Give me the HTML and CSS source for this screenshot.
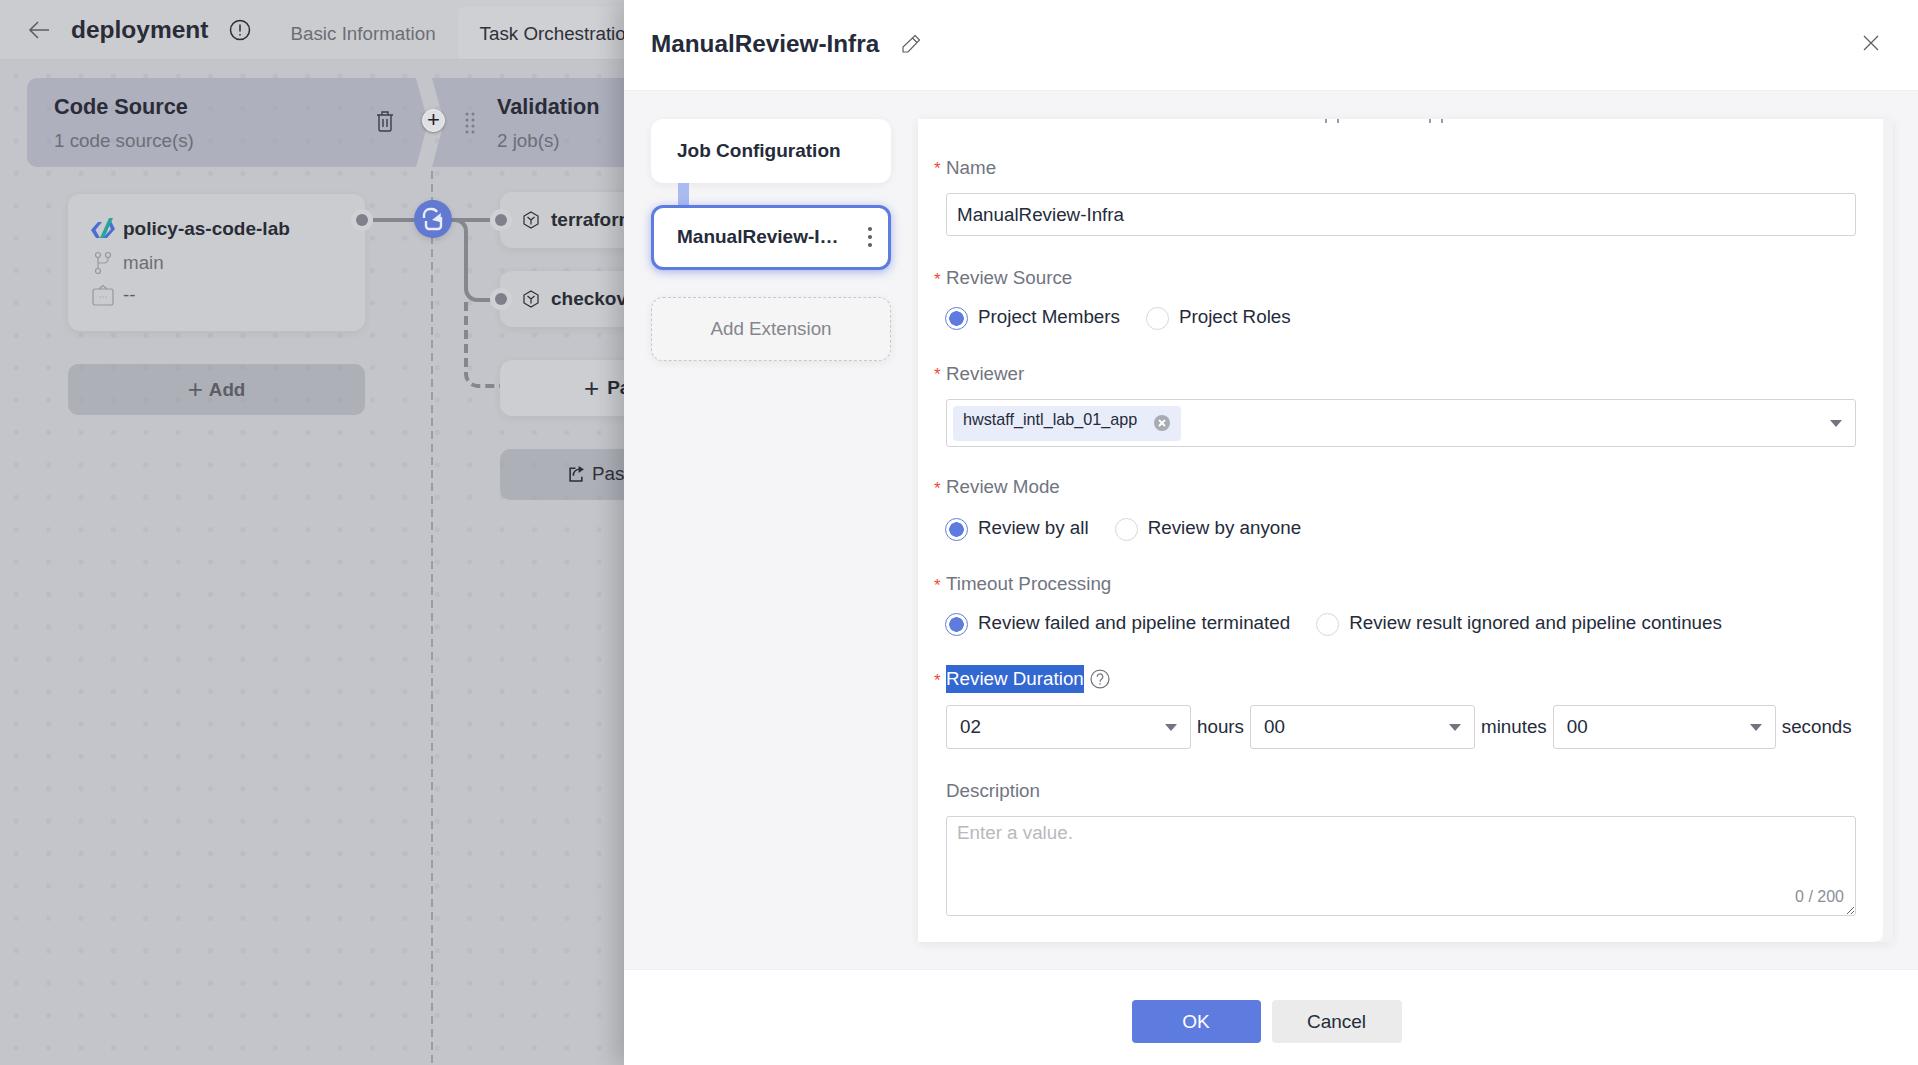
FILE: index.html
```html
<!DOCTYPE html>
<html lang="en">
<head>
  <meta charset="UTF-8">
  <title>deployment - Task Orchestration</title>
  <link rel="stylesheet" href="styles.css">
</head>
<body>

<div class="page">
  <div class="topbar">
    <svg class="back-icon" width="22" height="20" viewBox="0 0 22 20"><path d="M21 10H2M10 2l-8 8 8 8" fill="none" stroke="#5c5e66" stroke-width="1.6"/></svg>
    <span class="page-title">deployment</span>
    <svg class="info-icon" width="22" height="22" viewBox="0 0 22 22"><circle cx="11" cy="11" r="9.5" fill="none" stroke="#2b2d36" stroke-width="1.5"/><path d="M11 5.5v7M11 15v1.6" stroke="#2b2d36" stroke-width="1.5"/></svg>
    <div class="tab">Basic Information</div>
    <div class="tab active">Task Orchestration</div>
  </div>

  <div class="canvas">
    <svg class="links" width="624" height="1005" viewBox="0 60 624 1005">
      <path d="M432 171V1065" fill="none" stroke="#9a9ca2" stroke-width="2" stroke-dasharray="8 5"/>
      <path d="M373 220H500" fill="none" stroke="#85878f" stroke-width="4"/>
      <path d="M452 220h3a11 11 0 0 1 11 11v58a11 11 0 0 0 11 11h14" fill="none" stroke="#85878f" stroke-width="4"/>
      <path d="M466 302v72a12 12 0 0 0 12 12h22" fill="none" stroke="#85878f" stroke-width="4" stroke-dasharray="9 5"/>
    </svg>

    <div class="column first">
      <div class="stage stage-source">
        <div class="stage-text">
          <div class="stage-name">Code Source</div>
          <div class="stage-sub">1 code source(s)</div>
        </div>
        <svg class="trash" width="18" height="22" viewBox="0 0 18 22"><path d="M1 5h16M6 5V2h6v3M3 5v14.5a1.500 1.500 0 0 0 1.500 1.500h9a1.500 1.500 0 0 0 1.500-1.500V5M7 9v8M11 9v8" fill="none" stroke="#3c3e48" stroke-width="1.400"/></svg>
      </div>
      <div class="source-card">
        <div class="source-row title">
          <svg class="row-icon" width="26" height="26" viewBox="0 0 26 26"><path d="M8 6L1 14l5 8h4l-4.500-8L12 6z" fill="#4a6fd0"/><path d="M21 5l4 8-8 9h-4l8-9-2.500-5z" fill="#4a6fd0"/><path d="M19 2l-9 20h4l9-20z" fill="#27a59b"/></svg>
          <span>policy-as-code-lab</span>
        </div>
        <div class="source-row">
          <svg class="row-icon" width="18" height="24" viewBox="0 0 18 24"><g fill="none" stroke="#95979e" stroke-width="1.200"><circle cx="4" cy="4" r="2.500"/><circle cx="14" cy="4" r="2.500"/><circle cx="4" cy="20" r="2.500"/><path d="M4 6.500v11M14 6.500v1.500a4 4 0 0 1-4 4H4"/></g></svg>
          <span>main</span>
        </div>
        <div class="source-row">
          <svg class="row-icon" width="22" height="22" viewBox="0 0 22 22"><g fill="none" stroke="#95979e" stroke-width="1.200"><rect x="1" y="5" width="20" height="16" rx="2"/><path d="M7 5l4-3.500L15 5"/><path d="M7.500 13h1M10.500 13h1M13.500 13h1"/></g></svg>
          <span class="dash">--</span>
        </div>
      </div>
      <div class="ghost-btn add-source"><span class="plus">+</span> Add</div>
    </div>

    <div class="column second">
      <div class="stage stage-next">
        <svg class="grip" width="10" height="24" viewBox="0 0 10 24"><g fill="#7c7e87"><circle cx="2" cy="3" r="1.500"/><circle cx="8" cy="3" r="1.500"/><circle cx="2" cy="9" r="1.500"/><circle cx="8" cy="9" r="1.500"/><circle cx="2" cy="15" r="1.500"/><circle cx="8" cy="15" r="1.500"/><circle cx="2" cy="21" r="1.500"/><circle cx="8" cy="21" r="1.500"/></g></svg>
        <div class="stage-text">
          <div class="stage-name">Validation</div>
          <div class="stage-sub">2 job(s)</div>
        </div>
      </div>
      <div class="job-card">
        <svg class="cube" width="16" height="18" viewBox="0 0 16 18"><path d="M8 1l7 4v8l-7 4-7-4V5z" fill="none" stroke="#2b2d36" stroke-width="1.200"/><path d="M4.500 6L8 9l3.500-3M8 9v4.500" fill="none" stroke="#2b2d36" stroke-width="1.200"/></svg>
        <span>terraform</span>
      </div>
      <div class="job-card">
        <svg class="cube" width="16" height="18" viewBox="0 0 16 18"><path d="M8 1l7 4v8l-7 4-7-4V5z" fill="none" stroke="#2b2d36" stroke-width="1.200"/><path d="M4.500 6L8 9l3.500-3M8 9v4.500" fill="none" stroke="#2b2d36" stroke-width="1.200"/></svg>
        <span>checkov</span>
      </div>
      <div class="job-card add-job"><span class="plus">+</span> <b>Parallel Job</b></div>
      <div class="ghost-btn paste">
        <svg width="17" height="17" viewBox="0 0 16 16"><path d="M7 3H2v12h11v-4" fill="none" stroke="#2b2d36" stroke-width="1.500"/><path d="M5 10c0-4 3-6 6-6" fill="none" stroke="#2b2d36" stroke-width="1.500"/><path d="M10 1l5 3-5 3.500z" fill="#2b2d36"/></svg>
        <span>Paste</span>
      </div>
    </div>

    <div class="add-stage">+</div>
    <span class="port port-out"></span>
    <span class="port port-a"></span>
    <span class="port port-b"></span>
    <div class="hub">
      <svg width="24" height="26" viewBox="0 0 24 26"><g fill="none" stroke="#e9ecfa" stroke-width="2.400"><path d="M3 12V9a6 6 0 0 1 6-6h2a6 6 0 0 1 5 3"/><path d="M5 15v5a3 3 0 0 0 3 3h9a3 3 0 0 0 3-3v-9"/></g><path d="M11 14l8 2 1-9z" fill="#e9ecfa"/></svg>
    </div>
  </div>
</div>

<div class="drawer">
  <div class="drawer-head">
    <span class="drawer-title">ManualReview-Infra</span>
    <svg class="pencil" width="20" height="20" viewBox="0 0 20 20"><path d="M14 1.500l4.500 4.500L7 18H2v-5zM11.500 4l4.500 4.500" fill="none" stroke="#5c5e66" stroke-width="1.200"/></svg>
    <svg class="close" width="16" height="16" viewBox="0 0 16 16"><path d="M1 1l14 14M15 1L1 15" stroke="#5c5e66" stroke-width="1.300"/></svg>
  </div>

  <div class="drawer-body">
    <div class="job-steps">
      <div class="step">Job Configuration</div>
      <div class="step-link"></div>
      <div class="step selected">
        <span class="step-name">ManualReview-I…</span>
        <svg width="6" height="22" viewBox="0 0 6 22"><g fill="#5c5e66"><circle cx="3" cy="3" r="2"/><circle cx="3" cy="11" r="2"/><circle cx="3" cy="19" r="2"/></g></svg>
      </div>
      <div class="step add-step">Add Extension</div>
    </div>

    <div class="form-wrap">
      <div class="form-panel">
        <svg class="cut-text" width="120" height="5" viewBox="0 0 120 5"><path d="M1 0v4M13 0v4M105 0v4M117 0v4" stroke="#6c7592" stroke-width="1.400"/></svg>

        <div class="field">
          <div class="label low"><i>*</i>Name</div>
          <input class="text-input" type="text" value="ManualReview-Infra">
        </div>

        <div class="field radio-field">
          <div class="label"><i>*</i>Review Source</div>
          <div class="radios">
            <span class="radio checked">Project Members</span>
            <span class="radio">Project Roles</span>
          </div>
        </div>

        <div class="field reviewer-field">
          <div class="label low"><i>*</i>Reviewer</div>
          <div class="select reviewer">
            <span class="tag">hwstaff_intl_lab_01_app
              <svg width="16" height="16" viewBox="0 0 16 16"><circle cx="8" cy="8" r="8" fill="#a9abb2"/><path d="M5 5l6 6M11 5l-6 6" stroke="#fff" stroke-width="1.800"/></svg>
            </span>
            <span class="caret"></span>
          </div>
        </div>

        <div class="field radio-field">
          <div class="label mode"><i>*</i>Review Mode</div>
          <div class="radios">
            <span class="radio checked">Review by all</span>
            <span class="radio">Review by anyone</span>
          </div>
        </div>

        <div class="field radio-field">
          <div class="label"><i>*</i>Timeout Processing</div>
          <div class="radios">
            <span class="radio checked">Review failed and pipeline terminated</span>
            <span class="radio">Review result ignored and pipeline continues</span>
          </div>
        </div>

        <div class="field">
          <div class="label"><i>*</i><span class="picked">Review Duration</span>
            <svg class="help" width="20" height="20" viewBox="0 0 19 19"><circle cx="9.500" cy="9.500" r="8.500" fill="none" stroke="#74767e" stroke-width="1.200"/><path d="M6.800 7.300a2.700 2.700 0 1 1 4.300 2.200c-1 .7-1.600 1.200-1.600 2.500M9.500 13.500v1.500" fill="none" stroke="#74767e" stroke-width="1.200"/></svg>
          </div>
          <div class="duration">
            <div class="select hours">02<span class="caret"></span></div>
            <span>hours</span>
            <div class="select minutes">00<span class="caret"></span></div>
            <span>minutes</span>
            <div class="select seconds">00<span class="caret"></span></div>
            <span>seconds</span>
          </div>
        </div>

        <div class="field last">
          <div class="label plain">Description</div>
          <div class="area-wrap">
            <textarea class="area" placeholder="Enter a value."></textarea>
            <span class="counter">0 / 200</span>
          </div>
        </div>
      </div>
      <div class="track"></div>
    </div>
  </div>

  <div class="drawer-foot">
    <button class="btn primary">OK</button>
    <button class="btn">Cancel</button>
  </div>
</div>

</body>
</html>
```

FILE: styles.css
```css
* {
  box-sizing: border-box;
}

body {
  margin: 0;
  height: 100vh;
  overflow: hidden;
  position: relative;
  font-family: "Liberation Sans", Arial, sans-serif;
  font-size: 18.8px;
  color: #252b3a;
  background: #c4c5ca;
}

.page {
  width: 100%;
  height: 100%;
  display: flex;
  flex-direction: column;
}

.topbar {
  height: 60px;
  display: flex;
  align-items: flex-end;
  padding-left: 28px;
  background: #cbccd0;
  border-bottom: 1px solid #c1c2c7;
}

.back-icon {
  align-self: center;
}

.page-title {
  align-self: center;
  margin-left: 21px;
  font-size: 24.5px;
  font-weight: bold;
  color: #2a2c37;
}

.info-icon {
  align-self: center;
  margin-left: 20px;
}

.tab {
  height: 52px;
  line-height: 54px;
  padding: 0 22px;
  color: #6d6e75;
}

.tab:nth-of-type(1) {
  margin-left: 18px;
}

.tab.active {
  width: 240px;
  white-space: nowrap;
  background: #ced0d3;
  color: #2f313a;
  border-radius: 4px 4px 0 0;
}

.canvas {
  flex: 1;
  position: relative;
  display: flex;
  padding: 18px 0 0 27px;
  background-color: #c4c5ca;
  background-image: radial-gradient(circle, #bcbdc3 2.5px, transparent 3px);
  background-size: 32.4px 32.4px;
  background-position: 0px 0px;
}

.links {
  position: absolute;
  left: 0;
  top: 0;
}

.column {
  position: relative;
  flex: none;
}

.column.first {
  width: 405px;
}

.column.second {
  width: 500px;
}

.stage {
  height: 89px;
  display: flex;
  align-items: center;
  background: rgba(152, 155, 178, .5);
}

.stage-source {
  width: 401px;
  padding-left: 27px;
  border-radius: 10px 0 0 10px;
  clip-path: polygon(0 0, 389px 0, 100% 50%, 389px 100%, 0 100%);
}

.stage-next {
  padding-left: 33px;
  clip-path: polygon(0 0, 100% 0, 100% 100%, 0 100%, 12px 50%);
}

.stage-text {
  flex: 1;
}

.stage-next .stage-text {
  margin-left: 22px;
}

.stage-name {
  margin-top: 1px;
  font-size: 21.7px;
  font-weight: bold;
  color: #2a2c37;
}

.stage-sub {
  margin-top: 10px;
  color: #6d6e75;
}

.trash {
  margin: 0 34px 3px 0;
}

.source-card {
  width: 297px;
  height: 137px;
  margin: 27px 0 0 41px;
  padding: 18px 22px;
  background: #cbccd0;
  border-radius: 12px;
  box-shadow: 0 2px 8px rgba(0, 0, 0, .06);
}

.source-row {
  height: 32px;
  display: flex;
  align-items: center;
  color: #6d6e75;
}

.source-row.title {
  height: 35px;
  padding-bottom: 2px;
  font-size: 19px;
  font-weight: bold;
  color: #2a2c37;
}

.row-icon {
  flex: none;
  width: 26px;
  margin-right: 7px;
}

.dash {
  color: #5c5e66;
}

.ghost-btn {
  display: flex;
  align-items: center;
  justify-content: center;
  gap: 6px;
  background: rgba(152, 155, 166, .5);
  border-radius: 10px;
}

.add-source {
  width: 297px;
  height: 51px;
  margin: 33px 0 0 41px;
  font-weight: bold;
  color: #5c5e66;
}

.plus {
  font-size: 26px;
  font-weight: normal;
}

.job-card {
  width: 297px;
  height: 56px;
  margin: 25px 0 0 68px;
  padding-left: 23px;
  display: flex;
  align-items: center;
  gap: 12px;
  font-size: 19px;
  font-weight: bold;
  color: #2a2c37;
  background: #cbccd0;
  border-radius: 12px;
  box-shadow: 0 2px 8px rgba(0, 0, 0, .06);
}

.job-card + .job-card {
  margin-top: 23px;
}

.job-card.add-job {
  margin-top: 33px;
  padding-left: 84px;
  gap: 8px;
  background: #cdced2;
}

.paste {
  width: 297px;
  height: 51px;
  margin: 33px 0 0 68px;
  padding: 0 0 2px 68px;
  color: #2f313a;
  gap: 7px;
  justify-content: flex-start;
}

.add-stage {
  position: absolute;
  left: 422px;
  top: 49px;
  width: 23px;
  height: 23px;
  line-height: 20px;
  text-align: center;
  font-size: 22px;
  color: #1f212a;
  background: #dfe0e4;
  border: 1px solid #f0f0f2;
  border-radius: 50%;
  box-shadow: 0 1px 3px rgba(0, 0, 0, .3);
}

.port {
  position: absolute;
  width: 12px;
  height: 12px;
  background: #7f818a;
  border-radius: 50%;
  box-shadow: 0 0 0 5px #d0d1d5;
}

.port-out {
  left: 356px;
  top: 154px;
}

.port-a {
  left: 495px;
  top: 154px;
}

.port-b {
  left: 495px;
  top: 233px;
}

.hub {
  position: absolute;
  left: 414px;
  top: 140px;
  width: 38px;
  height: 38px;
  display: flex;
  align-items: center;
  justify-content: center;
  background: #6179d0;
  border-radius: 50%;
  box-shadow: 0 2px 6px rgba(0, 0, 0, .12);
}

/* drawer */
.drawer {
  position: absolute;
  top: 0;
  right: 0;
  bottom: 0;
  width: 1294px;
  display: flex;
  flex-direction: column;
  background: #fff;
  box-shadow: -8px 0 22px rgba(0, 0, 0, .18);
}

.drawer-head {
  height: 91px;
  flex: none;
  display: flex;
  align-items: center;
  padding: 0 39px 3px 27px;
  border-bottom: 1px solid #f0f0f2;
}

.drawer-title {
  font-size: 24.3px;
  font-weight: bold;
  color: #252b3a;
}

.pencil {
  margin-left: 22px;
}

.close {
  margin: 0 0 2px auto;
}

.drawer-body {
  flex: 1;
  min-height: 0;
  display: flex;
  gap: 27px;
  padding: 28px 25px 27px 27px;
  background: #f5f5f7;
}

.job-steps {
  width: 240px;
  flex: none;
}

.step {
  height: 64px;
  display: flex;
  align-items: center;
  padding: 0 26px;
  font-size: 19px;
  font-weight: bold;
  color: #252b3a;
  background: #fff;
  border-radius: 12px;
  box-shadow: 0 2px 8px rgba(0, 0, 0, .06);
}

.step-link {
  width: 11px;
  height: 22px;
  margin-left: 27px;
  background: #a9bbf1;
}

.step.selected {
  height: 65px;
  padding: 0 15px 2px 23px;
  justify-content: space-between;
  border: 3px solid #5e7ce0;
  box-shadow: 0 2px 10px rgba(94, 124, 224, .55);
}

.step-name {
  white-space: nowrap;
}

.step.add-step {
  margin-top: 27px;
  justify-content: center;
  font-size: 18.8px;
  font-weight: normal;
  color: #85868c;
  background: #f5f5f6;
  border: 1px dashed #c8c8cc;
}

.form-wrap {
  flex: 1;
  min-width: 0;
  display: flex;
  box-shadow: 0 2px 10px rgba(0, 0, 0, .07);
}

.form-panel {
  flex: 1;
  position: relative;
  padding: 36px 27px 0 28px;
  background: #fff;
  border-radius: 0 0 10px 0;
}

.track {
  width: 10px;
  background: #f2f2f5;
}

.cut-text {
  position: absolute;
  top: 0;
  left: 407px;
}

.field {
  margin-bottom: 30px;
}

.radio-field {
  margin-bottom: 32px;
}

.reviewer-field {
  margin-bottom: 28px;
}

.field.last {
  margin-bottom: 0;
}

.label {
  position: relative;
  height: 24px;
  line-height: 24px;
  margin-bottom: 14px;
  display: flex;
  align-items: center;
  color: #71757f;
}

.label.low {
  padding-top: 2px;
}

.label i {
  position: absolute;
  left: -12px;
  top: 2px;
  font-style: normal;
  font-size: 17px;
  color: #f4463e;
}

.label.plain {
  margin-bottom: 13px;
}

.radio-field .label {
  margin-bottom: 15px;
}

.radio-field .label.mode {
  margin-bottom: 17px;
}

.picked {
  height: 28px;
  line-height: 28px;
  color: #fff;
  background: #3367d1;
}

.help {
  margin-left: 6px;
}

.text-input {
  display: block;
  width: 100%;
  height: 43px;
  padding: 0 10px;
  font: inherit;
  color: #252b3a;
  background: #fff;
  border: 1px solid #d4d4d6;
  border-radius: 3px;
  outline: none;
}

.radios {
  height: 24px;
  display: flex;
  align-items: center;
  gap: 27px;
}

.radio {
  position: relative;
  padding-left: 32px;
  line-height: 24px;
  white-space: nowrap;
}

.radio::before {
  content: "";
  position: absolute;
  left: -1px;
  top: 2px;
  width: 21px;
  height: 21px;
  border: 1px solid #d8d8da;
  border-radius: 50%;
  background: #fff;
}

.radio.checked::before {
  border-color: #5e7ce0;
  background: radial-gradient(circle, #5e7ce0 0, #5e7ce0 7px, #fff 7.500px);
}

.select {
  position: relative;
  display: flex;
  align-items: center;
  background: #fff;
  border: 1px solid #d4d4d6;
  border-radius: 3px;
}

.caret {
  position: absolute;
  right: 13px;
  top: 50%;
  margin-top: -3px;
  width: 0;
  height: 0;
  border-left: 6px solid transparent;
  border-right: 6px solid transparent;
  border-top: 7px solid #71757f;
}

.reviewer {
  height: 48px;
  padding-left: 6px;
}

.tag {
  width: 228px;
  height: 35px;
  padding: 3px 11px 0 10px;
  display: flex;
  justify-content: space-between;
  font-size: 16.2px;
  line-height: 20px;
  color: #252b3a;
  background: #e9edfa;
  border-radius: 4px;
}

.tag svg {
  margin: 6px 0 0;
}

.duration {
  display: flex;
  align-items: center;
  gap: 6px;
}

.duration .select {
  height: 44px;
  padding-left: 13px;
}

.hours {
  width: 245px;
}

.minutes {
  width: 225px;
}

.seconds {
  width: 223px;
}

.area-wrap {
  position: relative;
}

.area {
  display: block;
  width: 100%;
  height: 100px;
  padding: 5px 10px;
  font: inherit;
  color: #252b3a;
  background: #fff;
  border: 1px solid #d4d4d6;
  border-radius: 3px;
  outline: none;
}

.area::placeholder {
  color: #b8b9bd;
}

.counter {
  position: absolute;
  right: 12px;
  bottom: 10px;
  font-size: 16px;
  color: #8a8e99;
}

.drawer-foot {
  height: 96px;
  flex: none;
  display: flex;
  justify-content: center;
  align-items: flex-start;
  gap: 11px;
  padding: 30px 9px 0 0;
  border-top: 1px solid #f0f0f2;
}

.btn {
  width: 130px;
  height: 43px;
  font: inherit;
  font-size: 19px;
  color: #252b3a;
  background: #ebebeb;
  border: none;
  border-radius: 4px;
}

.btn.primary {
  width: 129px;
  color: #fff;
  background: #5e7ce0;
}
```
